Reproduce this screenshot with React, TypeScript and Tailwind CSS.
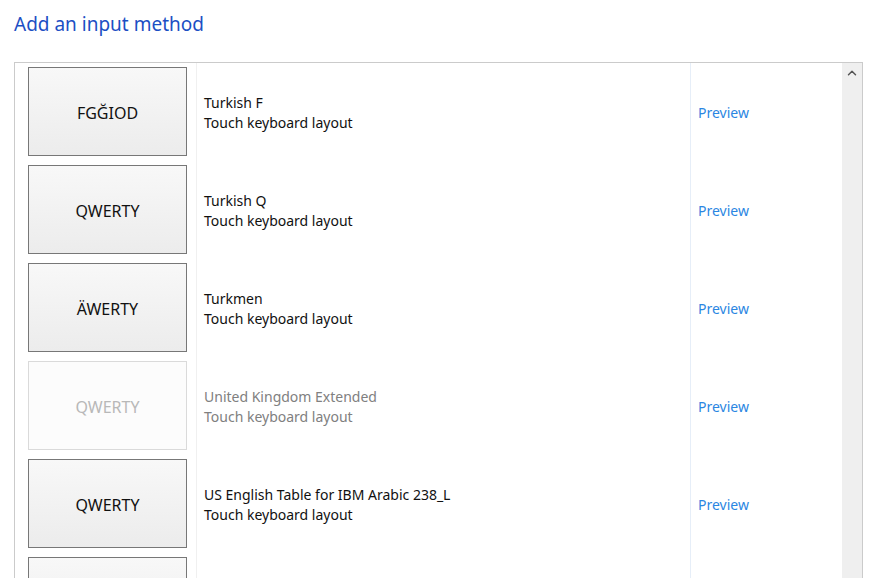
import { ChevronUp } from 'lucide-react'

type Layout = { key: string; name: string; disabled?: boolean }

const layouts: Layout[] = [
  { key: 'FGĞIOD', name: 'Turkish F' },
  { key: 'QWERTY', name: 'Turkish Q' },
  { key: 'ÄWERTY', name: 'Turkmen' },
  { key: 'QWERTY', name: 'United Kingdom Extended', disabled: true },
  { key: 'QWERTY', name: 'US English Table for IBM Arabic 238_L' },
]

function Tile({ label, disabled }: { label?: string; disabled?: boolean }) {
  return (
    <div
      className={`w-[159px] h-[89px] border flex items-center justify-center text-[16px] pt-[2px] ${
        disabled
          ? 'border-[#dadada] bg-[#fcfcfc] text-[#b8b8b8]'
          : 'border-[#777] bg-gradient-to-b from-[#f8f8f8] to-[#ececec] text-[#111]'
      }`}
    >
      {label}
    </div>
  )
}

function Row({ item }: { item?: Layout }) {
  const d = item?.disabled
  return (
    <div className="flex h-[98px] shrink-0">
      <div className="w-[182px] shrink-0 border-r border-[#f0f0f0] pl-[13px] pt-[4px]">
        <Tile label={item?.key} disabled={d} />
      </div>
      <div className={`w-[494px] shrink-0 border-r border-[#e6eef8] pl-[7px] pt-[4px] ${d ? 'text-[#808080]' : 'text-[#111]'}`}>
        {item && (
          <div className="h-[89px] flex flex-col justify-center text-[14px] leading-[20px] pt-[2px]">
            <div>{item.name}</div>
            <div>Touch keyboard layout</div>
          </div>
        )}
      </div>
      <div className="flex-1 pl-[7px] pt-[4px]">
        {item && <div className="h-[89px] flex items-center text-[14px] text-[#2b86e2] pt-[2px]">Preview</div>}
      </div>
    </div>
  )
}

export default function App() {
  return (
    <div className="w-[894px] h-[578px] overflow-hidden bg-white" style={{ fontFamily: '"Noto Sans", "Open Sans", sans-serif' }}>
      <h1 className="pl-[14px] pt-[10px] text-[19px] leading-[29px] text-[#1c4fc4]">Add an input method</h1>
      <div className="ml-[14px] mt-[23px] w-[849px] h-[540px] border border-[#cbcbcb] flex overflow-hidden">
        <div className="flex-1 flex flex-col">
          {layouts.map((l, i) => (
            <Row key={i} item={l} />
          ))}
          <Row />
        </div>
        <div className="w-[20px] bg-[#efefef] flex justify-center pt-[3px]">
          <ChevronUp className="w-[14px] h-[14px] text-[#555]" strokeWidth={2.5} />
        </div>
      </div>
    </div>
  )
}
